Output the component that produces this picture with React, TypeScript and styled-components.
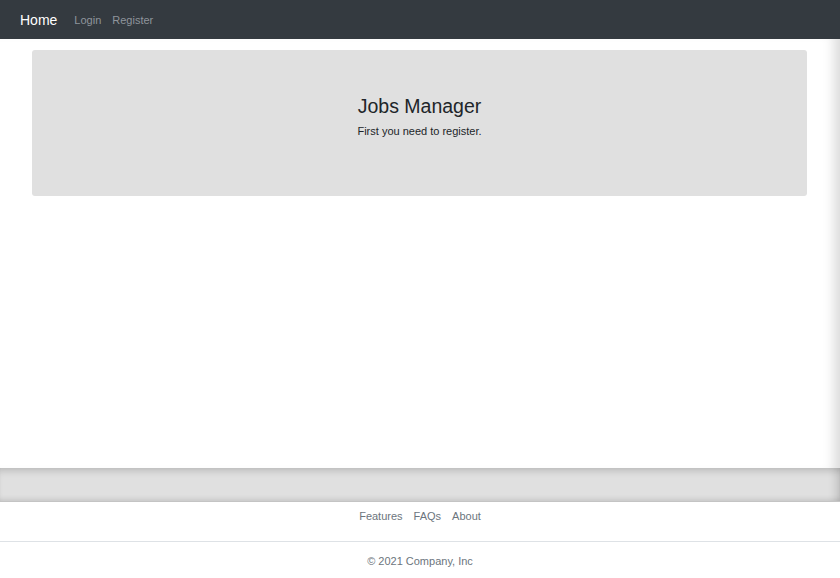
import React from "react";
import styled, { createGlobalStyle } from "styled-components";

const GlobalStyle = createGlobalStyle`
  html, body {
    margin: 0;
    padding: 0;
    background: #ffffff;
    font-family: "Liberation Sans", Arial, sans-serif;
  }
  * { box-sizing: border-box; }
`;

const Page = styled.div`
  width: 840px;
  height: 578px;
  display: flex;
  flex-direction: column;
  overflow: hidden;
`;

const NavBar = styled.nav`
  height: 39px;
  background: #343a40;
  display: flex;
  align-items: center;
  padding: 0 20px;
  flex-shrink: 0;
`;

const Brand = styled.a`
  color: #ffffff;
  font-size: 14px;
  margin-right: 17px;
  text-decoration: none;
  line-height: 1;
`;

const NavLink = styled.a`
  color: #8f959c;
  font-size: 11px;
  margin-right: 11px;
  text-decoration: none;
  line-height: 1;
  padding-top: 1px;
`;

const Main = styled.main`
  height: 429px;
  background: #ffffff;
  padding: 11px 33px 0 32px;
  box-shadow: inset -14px 0 12px -8px rgba(0, 0, 0, 0.14);
  flex-shrink: 0;
`;

const Jumbotron = styled.section`
  height: 146px;
  background: #e0e0e0;
  border-radius: 3px;
  padding-top: 45px;
  text-align: center;
`;

const Title = styled.h1`
  margin: 0 0 5px;
  font-size: 19.5px;
  font-weight: 400;
  line-height: 1.2;
  color: #212529;
`;

const Lead = styled.p`
  margin: 0;
  font-size: 11px;
  line-height: 1.5;
  color: #212529;
`;

const Band = styled.div`
  height: 34px;
  background: #e0e0e0;
  border-bottom: 1px solid #c4c4c4;
  box-shadow: inset 0 7px 7px -4px rgba(0, 0, 0, 0.16),
    inset 0 -5px 5px -3px rgba(0, 0, 0, 0.1),
    inset -10px 0 8px -6px rgba(0, 0, 0, 0.14);
  flex-shrink: 0;
`;

const Footer = styled.footer`
  flex: 1;
  background: #ffffff;
  display: flex;
  flex-direction: column;
`;

const FooterLinks = styled.ul`
  list-style: none;
  margin: 0;
  padding: 6px 0 0;
  height: 40px;
  border-bottom: 1px solid #dee2e6;
  display: flex;
  justify-content: center;
  gap: 11px;
`;

const FooterLink = styled.li`
  font-size: 11px;
  line-height: 1.5;
  color: #6c757d;
`;

const Copyright = styled.p`
  margin: 0;
  padding-top: 11px;
  font-size: 11px;
  line-height: 1.5;
  color: #6c757d;
  text-align: center;
`;

export default function App() {
  return (
    <>
      <GlobalStyle />
      <Page>
        <NavBar>
          <Brand>Home</Brand>
          <NavLink>Login</NavLink>
          <NavLink>Register</NavLink>
        </NavBar>
        <Main>
          <Jumbotron>
            <Title>Jobs Manager</Title>
            <Lead>First you need to register.</Lead>
          </Jumbotron>
        </Main>
        <Band />
        <Footer>
          <FooterLinks>
            <FooterLink>Features</FooterLink>
            <FooterLink>FAQs</FooterLink>
            <FooterLink>About</FooterLink>
          </FooterLinks>
          <Copyright>© 2021 Company, Inc</Copyright>
        </Footer>
      </Page>
    </>
  );
}
